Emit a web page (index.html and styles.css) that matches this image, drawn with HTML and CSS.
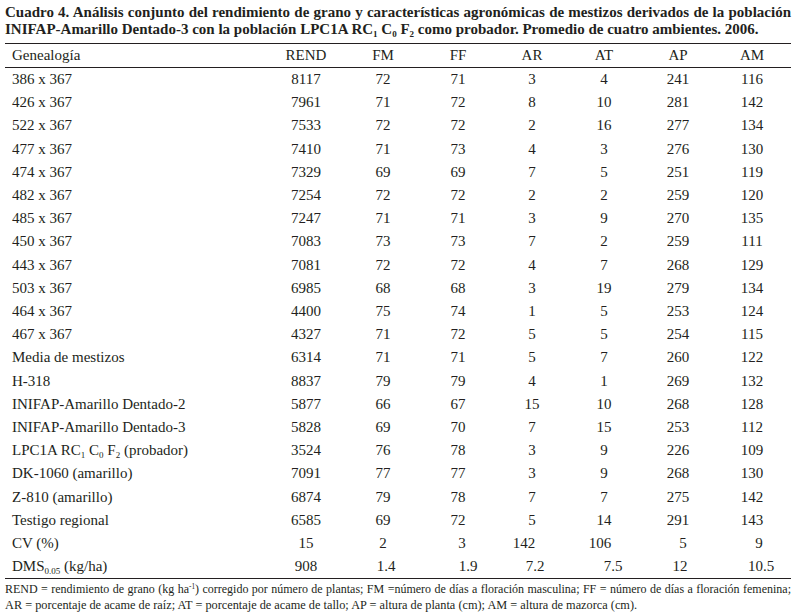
FILE: index.html
```html
<!DOCTYPE html>
<html lang="es">
<head>
<meta charset="utf-8">
<title>Cuadro 4</title>
<link rel="stylesheet" href="styles.css">
</head>
<body>
<div class="page">
  <div class="title">
    <div class="title-line justified">Cuadro 4. Análisis conjunto del rendimiento de grano y características agronómicas de mestizos derivados de la población</div>
    <div class="title-line">INIFAP-Amarillo Dentado-3 con la población LPC1A RC<sub>1</sub> C<sub>0</sub> F<sub>2</sub> como probador. Promedio de cuatro ambientes. 2006.</div>
  </div>
  <div class="table">
    <div class="row head">
      <div class="c name">Genealogía</div><div class="c">REND</div><div class="c">FM</div><div class="c">FF</div><div class="c">AR</div><div class="c">AT</div><div class="c">AP</div><div class="c">AM</div>
    </div>
    <div class="body">
      <div class="row"><div class="c name">386 x 367</div><div class="c">8117</div><div class="c">72</div><div class="c">71</div><div class="c">3</div><div class="c">4</div><div class="c">241</div><div class="c">116</div></div>
      <div class="row"><div class="c name">426 x 367</div><div class="c">7961</div><div class="c">71</div><div class="c">72</div><div class="c">8</div><div class="c">10</div><div class="c">281</div><div class="c">142</div></div>
      <div class="row"><div class="c name">522 x 367</div><div class="c">7533</div><div class="c">72</div><div class="c">72</div><div class="c">2</div><div class="c">16</div><div class="c">277</div><div class="c">134</div></div>
      <div class="row"><div class="c name">477 x 367</div><div class="c">7410</div><div class="c">71</div><div class="c">73</div><div class="c">4</div><div class="c">3</div><div class="c">276</div><div class="c">130</div></div>
      <div class="row"><div class="c name">474 x 367</div><div class="c">7329</div><div class="c">69</div><div class="c">69</div><div class="c">7</div><div class="c">5</div><div class="c">251</div><div class="c">119</div></div>
      <div class="row"><div class="c name">482 x 367</div><div class="c">7254</div><div class="c">72</div><div class="c">72</div><div class="c">2</div><div class="c">2</div><div class="c">259</div><div class="c">120</div></div>
      <div class="row"><div class="c name">485 x 367</div><div class="c">7247</div><div class="c">71</div><div class="c">71</div><div class="c">3</div><div class="c">9</div><div class="c">270</div><div class="c">135</div></div>
      <div class="row"><div class="c name">450 x 367</div><div class="c">7083</div><div class="c">73</div><div class="c">73</div><div class="c">7</div><div class="c">2</div><div class="c">259</div><div class="c">111</div></div>
      <div class="row"><div class="c name">443 x 367</div><div class="c">7081</div><div class="c">72</div><div class="c">72</div><div class="c">4</div><div class="c">7</div><div class="c">268</div><div class="c">129</div></div>
      <div class="row"><div class="c name">503 x 367</div><div class="c">6985</div><div class="c">68</div><div class="c">68</div><div class="c">3</div><div class="c">19</div><div class="c">279</div><div class="c">134</div></div>
      <div class="row"><div class="c name">464 x 367</div><div class="c">4400</div><div class="c">75</div><div class="c">74</div><div class="c">1</div><div class="c">5</div><div class="c">253</div><div class="c">124</div></div>
      <div class="row"><div class="c name">467 x 367</div><div class="c">4327</div><div class="c">71</div><div class="c">72</div><div class="c">5</div><div class="c">5</div><div class="c">254</div><div class="c">115</div></div>
      <div class="row"><div class="c name">Media de mestizos</div><div class="c">6314</div><div class="c">71</div><div class="c">71</div><div class="c">5</div><div class="c">7</div><div class="c">260</div><div class="c">122</div></div>
      <div class="row"><div class="c name">H-318</div><div class="c">8837</div><div class="c">79</div><div class="c">79</div><div class="c">4</div><div class="c">1</div><div class="c">269</div><div class="c">132</div></div>
      <div class="row"><div class="c name">INIFAP-Amarillo Dentado-2</div><div class="c">5877</div><div class="c">66</div><div class="c">67</div><div class="c">15</div><div class="c">10</div><div class="c">268</div><div class="c">128</div></div>
      <div class="row"><div class="c name">INIFAP-Amarillo Dentado-3</div><div class="c">5828</div><div class="c">69</div><div class="c">70</div><div class="c">7</div><div class="c">15</div><div class="c">253</div><div class="c">112</div></div>
      <div class="row"><div class="c name">LPC1A RC<sub>1</sub> C<sub>0</sub> F<sub>2</sub> (probador)</div><div class="c">3524</div><div class="c">76</div><div class="c">78</div><div class="c">3</div><div class="c">9</div><div class="c">226</div><div class="c">109</div></div>
      <div class="row"><div class="c name">DK-1060 (amarillo)</div><div class="c">7091</div><div class="c">77</div><div class="c">77</div><div class="c">3</div><div class="c">9</div><div class="c">268</div><div class="c">130</div></div>
      <div class="row"><div class="c name">Z-810 (amarillo)</div><div class="c">6874</div><div class="c">79</div><div class="c">78</div><div class="c">7</div><div class="c">7</div><div class="c">275</div><div class="c">142</div></div>
      <div class="row"><div class="c name">Testigo regional</div><div class="c">6585</div><div class="c">69</div><div class="c">72</div><div class="c">5</div><div class="c">14</div><div class="c">291</div><div class="c">143</div></div>
      <div class="row"><div class="c name">CV (%)</div><div class="c">15</div><div class="c">2</div><div class="c r4">3</div><div class="c l8">142</div><div class="c l4">106</div><div class="c r5">5</div><div class="c r7">9</div></div>
      <div class="row"><div class="c name">DMS<sub>0.05</sub> (kg/ha)</div><div class="c">908</div><div class="c r3">1.4</div><div class="c r10">1.9</div><div class="c r3">7.2</div><div class="c r9">7.5</div><div class="c r2">12</div><div class="c r9">10.5</div></div>
    </div>
  </div>
  <div class="notes">
    <div class="note-line justified">REND = rendimiento de grano (kg ha<sup>-1</sup>) corregido por número de plantas; FM =número de días a floración masculina; FF = número de días a floración femenina;</div>
    <div class="note-line last">AR = porcentaje de acame de raíz; AT = porcentaje de acame de tallo; AP = altura de planta (cm); AM = altura de mazorca (cm).</div>
  </div>
</div>
</body>
</html>
```

FILE: styles.css
```css
html, body {
  margin: 0;
  padding: 0;
  background: #ffffff;
}

.page {
  width: 786px;
  padding: 4px 0 0 5px;
  font-family: "Liberation Serif", "Times New Roman", serif;
  color: #231f20;
}

.title {
  font-weight: bold;
  font-size: 15px;
  line-height: 17px;
  margin-bottom: 5px;
}

.justified {
  text-align: justify;
  text-align-last: justify;
}

sub {
  font-size: 0.6em;
  line-height: 0;
  vertical-align: -0.35em;
}

sup {
  font-size: 0.6em;
  line-height: 0;
  vertical-align: 0.5em;
}

.table {
  font-size: 15px;
}

.row {
  display: grid;
  grid-template-columns: 264px 74px 80px 70px 78px 66px 82px 66px;
  line-height: 23.2px;
}

.head {
  line-height: 23px;
  border-top: 1px solid #231f20;
  border-bottom: 1px solid #231f20;
}

.body {
  border-bottom: 1px solid #231f20;
}

.c {
  text-align: center;
  white-space: nowrap;
}

.c.name {
  text-align: left;
  padding-left: 7px;
}

/* small per-cell shifts of the centred figures (rN = N px right, lN = N px left) */
.r2 { padding-left: 4px; }
.r3 { padding-left: 6px; }
.r4 { padding-left: 8px; }
.r5 { padding-left: 10px; }
.r7 { padding-left: 14px; }
.r9 { padding-left: 18px; }
.r10 { padding-left: 20px; }
.l4 { padding-right: 8px; }
.l8 { padding-right: 16px; }

.notes {
  padding-top: 3px;
  font-size: 12px;
  line-height: 15.5px;
}

.note-line.last {
  font-size: 12.3px;
}
```
